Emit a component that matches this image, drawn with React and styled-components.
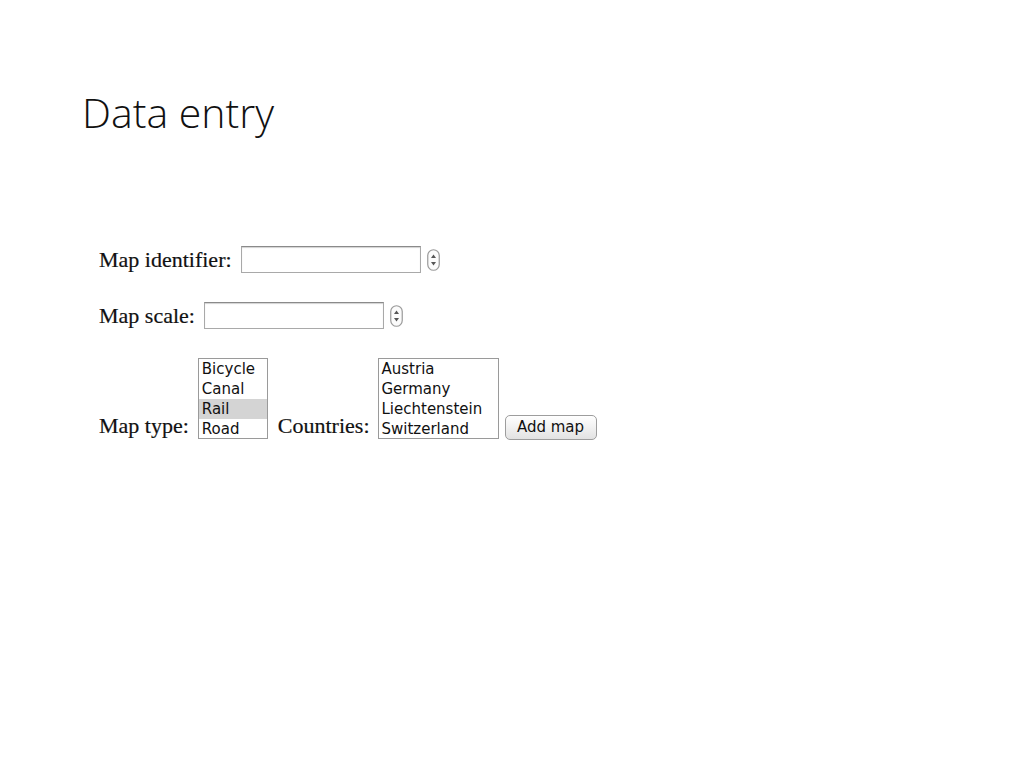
import React from 'react'
import styled, { createGlobalStyle } from 'styled-components'

const Global = createGlobalStyle`
  html, body {
    margin: 0;
    padding: 0;
    background: #ffffff;
  }
  body {
    width: 1024px;
    height: 768px;
    overflow: hidden;
  }
`

const Slide = styled.div`
  width: 1024px;
  height: 768px;
  box-sizing: border-box;
  padding: 86px 0 0 82px;
`

const Title = styled.h1`
  margin: 0;
  font-family: "Open Sans", "Liberation Sans", sans-serif;
  font-weight: 300;
  font-size: 41px;
  line-height: 52px;
  color: #111;
`

const Form = styled.div`
  margin: 108px 0 0 17px;
  display: flex;
  flex-direction: column;
  gap: 29px;
`

const Row = styled.div`
  display: flex;
  align-items: ${p => (p.$lists ? 'flex-end' : 'center')};
`

const Label = styled.span`
  font-family: "Liberation Serif", "Times New Roman", serif;
  font-size: 22px;
  line-height: 27px;
  color: #111;
  -webkit-text-stroke: 0.2px #111;
  margin-right: ${p => p.$gap || 9}px;
`

const TextBox = styled.div`
  width: 180px;
  height: 27px;
  box-sizing: border-box;
  border: 1px solid #a9a9a9;
  border-top-color: #8a8a8a;
  box-shadow: inset 0 1px 1px rgba(0, 0, 0, 0.18);
  background: #fff;
`

const Spinner = styled.svg`
  margin-left: 6px;
  width: 13px;
  height: 22px;
`

const ListBox = styled.div`
  width: ${p => p.$w}px;
  height: 81px;
  box-sizing: border-box;
  border: 1px solid #9a9a9a;
  background: #fff;
  margin-right: ${p => p.$gap || 0}px;
  overflow: hidden;
`

const Option = styled.div`
  font-family: "DejaVu Sans", "Liberation Sans", sans-serif;
  font-size: 15px;
  line-height: 20px;
  height: 20px;
  padding-left: 3px;
  color: #111;
  background: ${p => (p.$selected ? '#d4d4d4' : 'transparent')};
  white-space: nowrap;
`

const Button = styled.div`
  margin-left: 6px;
  margin-bottom: -1px;
  width: 92px;
  height: 25px;
  box-sizing: border-box;
  border: 1px solid #9d9d9d;
  border-radius: 5px;
  background: linear-gradient(#ffffff, #f1f1f1 50%, #e2e2e2);
  font-family: "DejaVu Sans", "Liberation Sans", sans-serif;
  font-size: 15px;
  line-height: 23px;
  text-align: center;
  color: #111;
`

function StepArrows() {
  return (
    <Spinner viewBox="0 0 13 22">
      <rect x="0.75" y="0.75" width="11.5" height="20.5" rx="5.75" fill="#fbfbfb" stroke="#9a9a9a" strokeWidth="1.2" />
      <path d="M6.5 5.5 L9 9 L4 9 Z" fill="#555" />
      <path d="M6.5 16.5 L9 13 L4 13 Z" fill="#555" />
    </Spinner>
  )
}

const types = ['Bicycle', 'Canal', 'Rail', 'Road']
const countries = ['Austria', 'Germany', 'Liechtenstein', 'Switzerland']

export default function App() {
  return (
    <>
      <Global />
      <Slide>
        <Title>Data entry</Title>
        <Form>
          <Row>
            <Label>Map identifier:</Label>
            <TextBox />
            <StepArrows />
          </Row>
          <Row>
            <Label>Map scale:</Label>
            <TextBox />
            <StepArrows />
          </Row>
          <Row $lists>
            <Label>Map type:</Label>
            <ListBox $w={70} $gap={10}>
              {types.map(t => (
                <Option key={t} $selected={t === 'Rail'}>{t}</Option>
              ))}
            </ListBox>
            <Label $gap={8}>Countries:</Label>
            <ListBox $w={121}>
              {countries.map(c => (
                <Option key={c}>{c}</Option>
              ))}
            </ListBox>
            <Button>Add map</Button>
          </Row>
        </Form>
      </Slide>
    </>
  )
}
